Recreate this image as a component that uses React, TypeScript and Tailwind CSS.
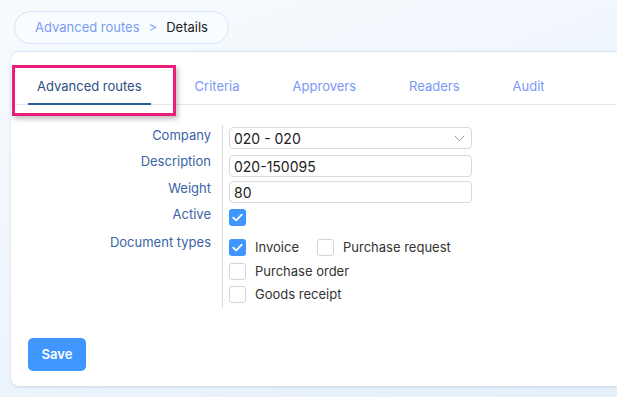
import React from "react";

const Check = ({ checked }: { checked?: boolean }) =>
  checked ? (
    <span className="flex h-[17px] w-[17px] shrink-0 items-center justify-center rounded-[3px] bg-[#4096ff]">
      <svg width="11" height="9" viewBox="0 0 11 9" fill="none">
        <path d="M1.2 4.6 L4.2 7.4 L9.8 1.6" stroke="white" strokeWidth="1.8" strokeLinecap="round" strokeLinejoin="round" />
      </svg>
    </span>
  ) : (
    <span className="block h-[17px] w-[17px] shrink-0 rounded-[3px] border border-[#d4d4d4] bg-white" />
  );

const Label = ({ children, cls = "" }: { children: React.ReactNode; cls?: string }) => (
  <div className={`text-right text-[13px] leading-[16px] text-[#3b63a6] ${cls}`}>{children}</div>
);

export default function App() {
  return (
    <div className="h-[397px] w-[617px] overflow-hidden bg-[linear-gradient(160deg,#f7fbfe_0%,#f0f6fd_45%,#e4eff9_100%)] font-['Inter',sans-serif]">
      <div className="pl-[14px] pt-[11px]">
        <div className="inline-flex h-[33px] items-center gap-[9px] rounded-full border border-[#d3e6f7] bg-[#f9fcff] px-[20px] text-[13px]">
          <span className="text-[#7a9cf0]">Advanced routes</span>
          <span className="text-[#7a9cf0]">&gt;</span>
          <span className="text-[#222]">Details</span>
        </div>
      </div>
      <div className="relative ml-[11px] mt-[7px] h-[335px] rounded-l-lg border-t border-[#d3e6f7] bg-white shadow-[0_1px_3px_rgba(60,100,150,0.18)]">
        <div className="flex h-[53px] items-end gap-[35px] border-b border-[#e8e8e8] pl-[17px] text-[13px] leading-[16px]">
          <div className="-mb-px border-b-2 border-[#2b5a9e] px-[9px] pb-[9px] text-[#2c4e85]">Advanced routes</div>
          <div className="px-[9px] pb-[10px] text-[#7b98f5]">Criteria</div>
          <div className="px-[9px] pb-[10px] text-[#7b98f5]">Approvers</div>
          <div className="px-[9px] pb-[10px] text-[#7b98f5]">Readers</div>
          <div className="px-[9px] pb-[10px] text-[#7b98f5]">Audit</div>
        </div>
        <div className="pointer-events-none absolute left-[1px] top-[13px] h-[51px] w-[164px] border-[3px] border-[#e91e78] shadow-[2px_3px_5px_rgba(0,0,0,0.25)]" />

        <div className="mt-[20px] grid grid-cols-[200px_1fr] gap-x-[11px]">
          <Label cls="pt-[2px]">Company</Label>
          <div className="border-l border-[#d9d9d9] pb-[4px] pl-[6px] pt-[2px]">
            <div className="flex h-[22px] w-[243px] items-center justify-between rounded-[4px] border border-[#d9d9d9] pl-[4px] pr-[6px] text-[14px] text-[#222]">
              <span>020 - 020</span>
              <svg width="11" height="7" viewBox="0 0 11 7" fill="none">
                <path d="M0.8 0.8 L5.5 5.8 L10.2 0.8" stroke="#9a9a9a" strokeWidth="1" />
              </svg>
            </div>
          </div>

          <Label>Description</Label>
          <div className="border-l border-[#d9d9d9] pb-[3px] pl-[6px] pt-[2px]">
            <div className="flex h-[22px] w-[243px] items-center rounded-[4px] border border-[#d9d9d9] pl-[4px] text-[14px] text-[#222]">
              020-150095
            </div>
          </div>

          <Label>Weight</Label>
          <div className="border-l border-[#d9d9d9] pb-[6px] pl-[6px] pt-[1px]">
            <div className="flex h-[22px] w-[243px] items-center rounded-[4px] border border-[#d9d9d9] pl-[4px] text-[14px] text-[#222]">
              80
            </div>
          </div>

          <Label cls="-mt-[3px]">Active</Label>
          <div className="border-l border-[#d9d9d9] pb-[8px] pl-[6px]">
            <Check checked />
          </div>

          <Label>Document types</Label>
          <div className="flex flex-col gap-[6.5px] border-l border-[#d9d9d9] pb-[5px] pl-[6px] pt-[5px] text-[13px] text-[#333]">
            <div className="flex items-center">
              <Check checked />
              <span className="ml-[9px] leading-[17px]">Invoice</span>
              <span className="ml-[18px]">
                <Check />
              </span>
              <span className="ml-[9px] leading-[17px]">Purchase request</span>
            </div>
            <div className="flex items-center">
              <Check />
              <span className="ml-[9px] leading-[17px]">Purchase order</span>
            </div>
            <div className="flex items-center">
              <Check />
              <span className="ml-[9px] leading-[17px]">Goods receipt</span>
            </div>
          </div>
        </div>

        <div className="pl-[17px] pt-[30px]">
          <button className="h-[33px] w-[58px] rounded-[5px] bg-[#4096ff] text-[13px] font-semibold text-white">
            Save
          </button>
        </div>
      </div>
    </div>
  );
}
